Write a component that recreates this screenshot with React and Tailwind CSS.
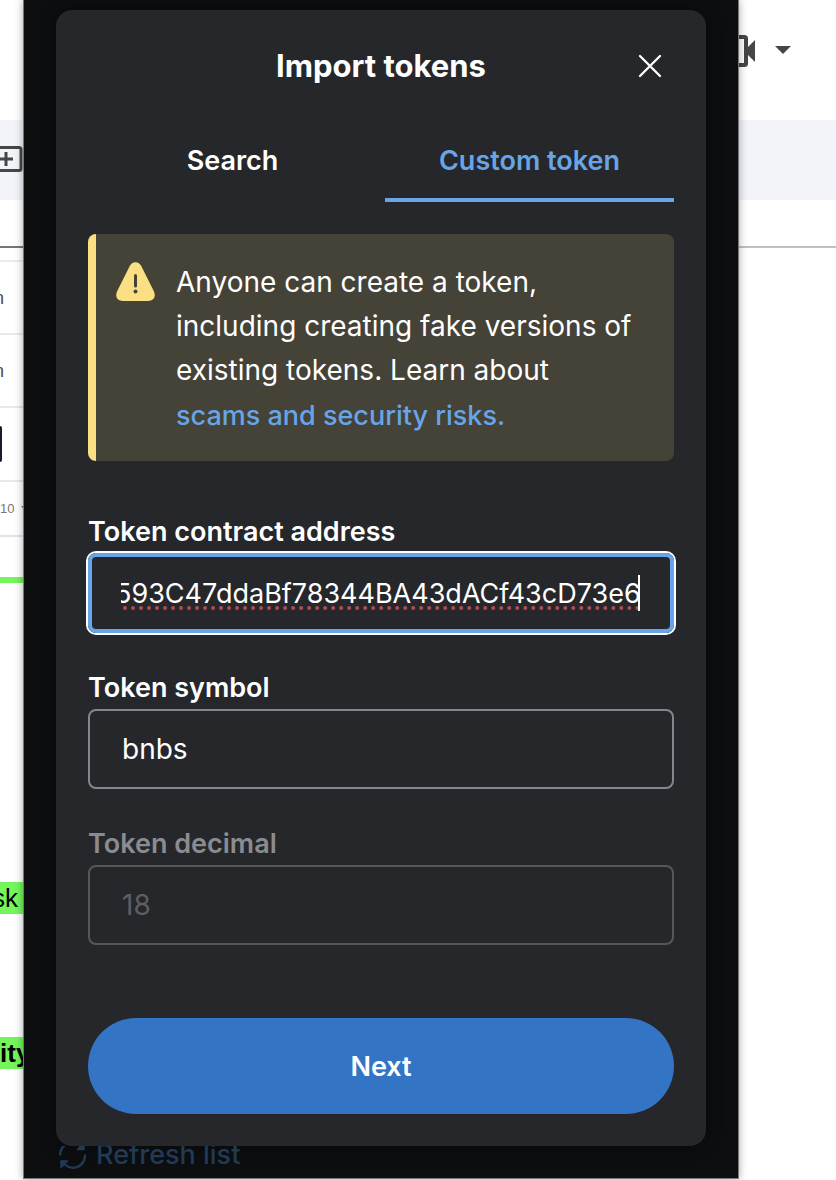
import { useLayoutEffect, useRef, useState } from "react";

const fieldBase =
  "block w-full h-20 rounded-lg bg-transparent px-8 text-[28px] focus:outline-none";
const labelBase = "block text-[27px] font-semibold leading-[46px] -mb-[2px]";

const Row = () => (
  <div className="flex h-[73px] items-center justify-end border-b-2 border-[#e9e9ec] text-lg text-[#4a4a4a]">
    <span className="pr-[19px]">n</span>
  </div>
);

const LeftPage = () => (
  <div className="w-[23px] shrink-0 overflow-hidden bg-white font-['Liberation_Sans',sans-serif]">
    <div className="h-[120px]" />
    <div className="flex h-20 items-center justify-end bg-[#f3f4fa]">
      <svg width="24" height="26" viewBox="0 0 24 26" className="mb-[2px] shrink-0" fill="none" stroke="#444746" strokeWidth="3">
        <rect x="-8" y="1.500" width="30" height="23" rx="2" />
        <path d="M0 13h14M7 6v14" />
      </svg>
    </div>
    <div className="h-12 border-b-2 border-[#777777]" />
    <div className="h-[14px] border-b-2 border-[#ececec]" />
    <Row />
    <Row />
    <div className="flex h-[74px] items-center border-b-2 border-[#e9e9ec]">
      <div className="h-9 w-[2px] rounded-r bg-[#1c1a2b]" />
    </div>
    <div className="flex h-[55px] items-center border-b-2 border-[#e0e2ec] text-[13px] text-[#777777]">
      <span>10</span>
      <svg width="8" height="6" viewBox="0 0 8 6" className="ml-[7px] shrink-0" fill="#777777">
        <path d="M0 0H8L4 5Z" />
      </svg>
    </div>
    <div className="mt-10 h-[6px] bg-[#74f55b]" />
    <div className="mt-[299px] flex h-8 items-center justify-end bg-[#74f55b] pr-[5px] text-[26px] text-black">
      sk
    </div>
    <div className="mt-[123px] flex h-8 items-center bg-[#74f55b] text-[26px] font-bold text-black">
      ity
    </div>
  </div>
);

const RightPage = () => (
  <div className="w-[97px] shrink-0 bg-white">
    <div className="flex h-[120px] items-start gap-5 pt-[35px]">
      <svg width="16" height="32" viewBox="0 0 16 32" fill="none">
        <path d="M-4 2H5.500Q7 2 7 3.500V28.500Q7 30 5.500 30H-4" stroke="#444746" strokeWidth="4" />
        <path d="M16 5V27L8 19V13Z" fill="#444746" />
      </svg>
      <svg width="16" height="32" viewBox="0 0 16 32">
        <path d="M0 11H16L8 19Z" fill="#444746" />
      </svg>
    </div>
    <div className="h-20 bg-[#f3f4fa]" />
    <div className="h-12 border-b-2 border-[#c0c0c0]" />
  </div>
);

const WarningIcon = () => (
  <svg width="39" height="39" viewBox="0 0 39 39" className="shrink-0">
    <path
      d="M14 3.500C16.500 -1 22.500 -1 25 3.500L37.500 28.500C40.500 34 38 39 32 39H7C1 39 -1.500 34 1.500 28.500Z"
      fill="#fbdf83"
    />
    <path d="M19.500 13.500V24" stroke="#454237" strokeWidth="3" strokeLinecap="round" />
    <circle cx="19.500" cy="29.500" r="2" fill="#454237" />
  </svg>
);

const RefreshIcon = () => (
  <svg width="28" height="28" viewBox="0 0 28 28" fill="none" stroke="#213a55" strokeWidth="2.400">
    <path d="M2 13.500A12 12 0 0 1 24.500 8M27 14.500A12 12 0 0 1 4.500 20.500" strokeLinecap="round" />
    <path d="M26 2V8.500H19.500ZM3 26.500V20H9.500Z" fill="#213a55" strokeWidth="1.500" strokeLinejoin="round" />
  </svg>
);

const App = () => {
  const addressRef = useRef(null);
  const [address, setAddress] = useState("593C47ddaBf78344BA43dACf43cD73e6");
  const [symbol, setSymbol] = useState("bnbs");

  // keep the end of the long address in view
  useLayoutEffect(() => {
    const el = addressRef.current;
    el.scrollLeft = el.scrollWidth;
  }, [address]);

  return (
    <div className="flex w-full bg-white font-['Inter',sans-serif]">
      <LeftPage />
      <main className="relative mb-[1px] min-w-0 flex-1 border border-[#77777b] border-t-0 bg-[#0d0e10] px-8 pt-[10px] shadow-[0_0_8px_rgba(0,0,0,0.35)]">
        <section className="rounded-2xl bg-[#26272b] p-8 shadow-[0_0_16px_rgba(0,0,0,0.4)]">
          <header className="relative flex h-12 items-center justify-center">
            <h1 className="text-[31px] font-bold text-white">Import tokens</h1>
            <button type="button" aria-label="Close" className="absolute right-3 top-3">
              <svg width="24" height="24" viewBox="0 0 24 24" stroke="white" strokeWidth="2.300" strokeLinecap="round">
                <path d="M2 2L22 22M22 2L2 22" />
              </svg>
            </button>
          </header>

          <div className="mt-8 flex gap-2" role="tablist">
            <button type="button" role="tab" aria-selected="false" className="h-20 flex-1 border-b-4 border-transparent pt-[2px] text-[27px] font-semibold text-white">
              Search
            </button>
            <button type="button" role="tab" aria-selected="true" className="h-20 flex-1 border-b-4 border-[#67a5e6] pt-[2px] text-[27px] font-semibold text-[#67a5e6]">
              Custom token
            </button>
          </div>

          <div className="mt-8 flex gap-[21px] rounded-lg border-l-8 border-[#fbdf83] bg-[#454237] pb-[22px] pl-5 pt-[26px]">
            <div className="pt-[2px]">
              <WarningIcon />
            </div>
            <p className="text-[28px] leading-[44px] text-white">
              Anyone can create a token,
              <br />
              including creating fake versions of
              <br />
              existing tokens. Learn about
              <a href="#scams" className="block text-[27px] font-medium leading-[47px] text-[#67a5e6]">
                scams and security risks.
              </a>
            </p>
          </div>

          <form className="mt-12" onSubmit={(e) => e.preventDefault()}>
            <label htmlFor="address" className={`${labelBase} text-white`}>
              Token contract address
            </label>
            <div className="relative rounded-lg border-4 border-[#67a5e6] px-[29px] ring-2 ring-white">
              <input
                id="address"
                ref={addressRef}
                type="text"
                spellCheck={false}
                value={address}
                onChange={(e) => setAddress(e.target.value)}
                className="block h-[72px] w-full bg-transparent text-[27px] text-white underline decoration-[#b84a4f] decoration-dotted decoration-4 underline-offset-4 [text-decoration-skip-ink:none] focus:outline-none"
              />
              <span className="absolute right-[30px] top-[18px] h-9 w-[2px] bg-white" />
            </div>

            <label htmlFor="symbol" className={`${labelBase} mt-8 text-white`}>
              Token symbol
            </label>
            <input
              id="symbol"
              type="text"
              value={symbol}
              onChange={(e) => setSymbol(e.target.value)}
              className={`${fieldBase} border-2 border-[#85868b] text-white`}
            />

            <label htmlFor="decimal" className={`${labelBase} mt-8 text-[#8b8c8f]`}>
              Token decimal
            </label>
            <input
              id="decimal"
              type="text"
              value="18"
              disabled
              className={`${fieldBase} border-2 border-[#55575b] text-[#5c5e62]`}
            />

            <button type="submit" className="mt-[73px] h-24 w-full rounded-full bg-[#3375c4] pt-[2px] text-[27px] font-semibold text-white">
              Next
            </button>
          </form>
        </section>

        <div className="flex h-8 items-end overflow-hidden">
          <a href="#refresh" className="flex h-[46px] items-center gap-[10px] pl-[2px] text-[27px] font-medium text-[#213a55]">
            <RefreshIcon />
            Refresh list
          </a>
        </div>
      </main>
      <RightPage />
    </div>
  );
};

export default App;
